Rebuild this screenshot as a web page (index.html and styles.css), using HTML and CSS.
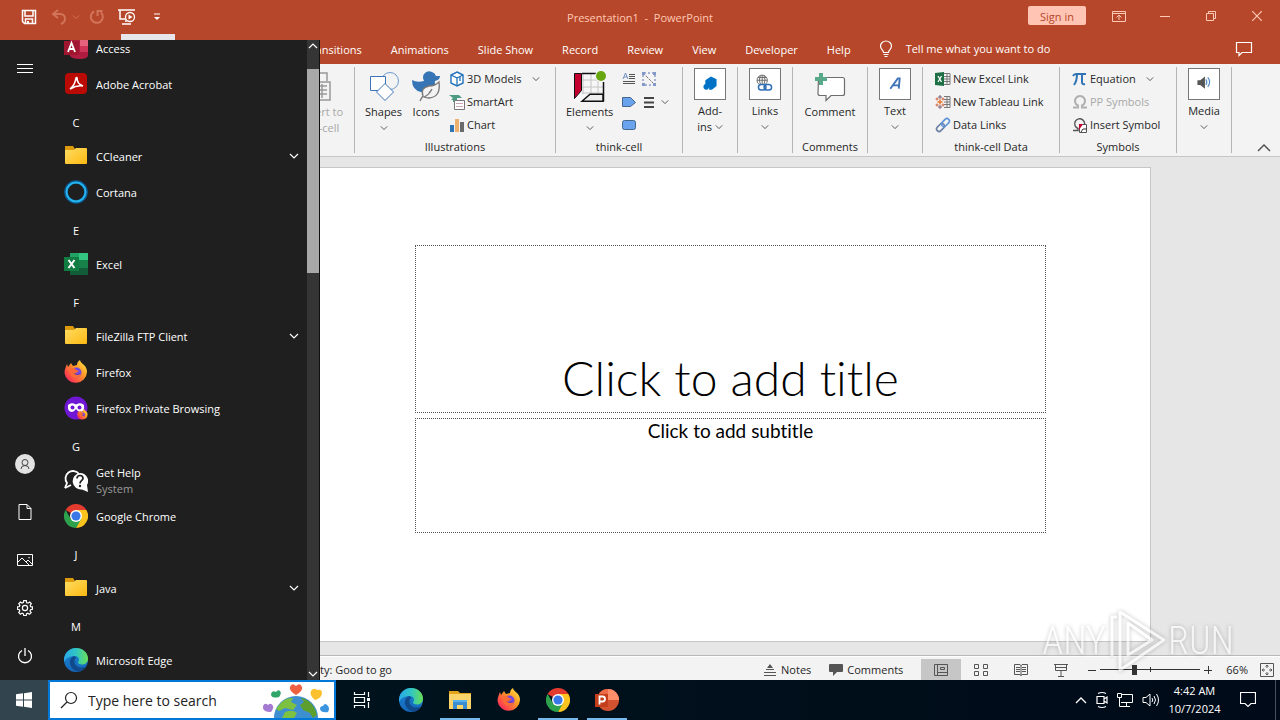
FILE: index.html
```html
<!DOCTYPE html>
<html lang="en">

<head>
    <meta charset="UTF-8">
    <meta name="viewport" content="width=device-width, initial-scale=1.0">
    <title>Presentation1 - PowerPoint</title>
    <link rel="stylesheet" href="styles.css">
</head>

<body>
    <!-- Shared icons -->
    <svg class="defs" width="0" height="0" aria-hidden="true">
        <defs>
            <linearGradient id="g-folder" x1="0" y1="0" x2="1" y2="1">
                <stop offset="0" stop-color="#ffdc63" />
                <stop offset="1" stop-color="#fcb912" />
            </linearGradient>
            <linearGradient id="g-edge" x1="0" y1="0" x2="1" y2="0">
                <stop offset="0" stop-color="#2aa8e8" />
                <stop offset="0.5" stop-color="#2fc6c4" />
                <stop offset="1" stop-color="#6ade55" />
            </linearGradient>
            <linearGradient id="g-edge2" x1="0" y1="0" x2="0" y2="1">
                <stop offset="0" stop-color="#1b87d6" />
                <stop offset="1" stop-color="#1466b8" />
            </linearGradient>
            <linearGradient id="g-fox" x1="1" y1="0" x2="0" y2="1">
                <stop offset="0" stop-color="#fff04a" />
                <stop offset="0.4" stop-color="#ff9a26" />
                <stop offset="0.8" stop-color="#ff3b50" />
                <stop offset="1" stop-color="#e31587" />
            </linearGradient>
        </defs>
        <symbol id="folder" viewBox="0 2 24 24">
            <path d="M1 4h8l2 3h10v5H1z" fill="#dc9a0c" />
            <path d="M1 8h9l2-2h10q1 0 1 1v14q0 1-1 1H2q-1 0-1-1z" fill="url(#g-folder)" />
        </symbol>
        <symbol id="chevron" viewBox="0 0 10 10">
            <path d="M1 3l4 4 4-4" fill="none" stroke="currentColor" stroke-width="1.2" />
        </symbol>
        <symbol id="edge" viewBox="0 0 24 24">
            <circle cx="12" cy="12" r="12" fill="url(#g-edge2)" />
            <path d="M0 11C1 4 6 0 12 0c7 0 12 5 12 10.500 0 4-3 6-6 6-2.500 0-4-1-4-2 0-.8 1-1.200 1-3 0-2-2-3.500-4.500-3.500C6 8 2 10 0 14z" fill="url(#g-edge)" />
            <path d="M10 8.300c-3 1-4.500 4-4 7.200.6 4 4 7 8 8.300 3.500-.5 6.500-2.600 8.200-5.400-5 2.600-11.200.6-11.700-4.400-.2-2 .5-3.400 1.700-4.200-.5-1-1.200-1.500-2.200-1.500z" fill="#114a8b" />
        </symbol>
        <symbol id="firefox" viewBox="0 0 24 24">
            <path d="M3 4l1 3 3-4 2 3 4-1c0-2 1-4 3-5 0 2 2 3 4 5 2 2 3 4 3 7a11.300 11.300 0 0 1-22.500 1C.500 9 2 7 3 4z" fill="url(#g-fox)" />
            <circle cx="12.500" cy="12.500" r="5" fill="#7548e0" />
            <path d="M6 9c3-2 5-1 6 1l3 1c-1 1-2 1.500-3 1.500 0 2 3 3 5 1.500-1 3-4 4.500-7 3.500-3-1-5-4-4-8.500z" fill="#ff6a35" />
            <path d="M10 12.500c1 1.500 4 2 6 .5-1 2.500-5 3-6-.5z" fill="#4a3bc4" />
        </symbol>
        <symbol id="chrome" viewBox="0 0 24 24">
            <path d="M12 12L1.600 6A12 12 0 0 1 22.400 6z" fill="#e33b2e" />
            <path d="M22.400 6H12v6h5.200L12 24A12 12 0 0 0 22.400 6z" fill="#fcc31e" />
            <path d="M1.600 6A12 12 0 0 0 12 24l5.200-9H12L6.800 15z" fill="#2da14c" />
            <circle cx="12" cy="12" r="6" fill="#fff" />
            <circle cx="12" cy="12" r="4.600" fill="#3b78e7" />
        </symbol>
    </svg>

    <div class="desktop">
        <div class="window">
            <header class="title-bar">
                <div class="quick-access">
                    <button aria-label="Save"><svg width="16" height="16" viewBox="0 0 16 16"><path d="M1.500 1.500h13v13h-11l-2-2zM4 1.500V7h8V1.500M4.500 14.500V10h7v4.500" fill="none" stroke="#fff" stroke-width="1.500" /><path d="M6 12h2v3H6z" fill="#fff" /></svg></button>
                    <button class="faded" aria-label="Undo"><svg width="16" height="16" viewBox="0 0 16 16"><path d="M7 1L2 5l5 4M2 5h7q5 0 5 5 0 3-4 5" fill="none" stroke="currentColor" stroke-width="2" /></svg></button>
                    <button class="faded narrow" aria-label="Undo list"><svg width="8" height="8"><use href="#chevron" /></svg></button>
                    <button class="faded" aria-label="Redo"><svg width="16" height="16" viewBox="0 0 16 16"><path d="M5 2.500A6 6 0 1 0 12 3.500M8.500 7V2h5" fill="none" stroke="currentColor" stroke-width="2" /></svg></button>
                    <button class="present" aria-label="Start from beginning"><svg width="18" height="18" viewBox="0 0 18 18"><path d="M0 2h17M2 2v9h5M8 11v3M4 16h9" fill="none" stroke="#fff" stroke-width="1.500" /><circle cx="12" cy="9" r="4.500" fill="#b7472a" stroke="#fff" stroke-width="1.300" /><path d="M10.500 6.500l4 2.500-4 2.500z" fill="#fff" /></svg></button>
                    <button aria-label="Customize"><svg width="8" height="8" viewBox="0 0 8 8"><path d="M1 1h6" stroke="#fff" /><path d="M1 4h6L4 7z" fill="#fff" /></svg></button>
                </div>
                <div class="document-title">Presentation1&nbsp; -&nbsp; PowerPoint</div>
                <div class="window-controls">
                    <button class="sign-in">Sign in</button>
                    <button aria-label="Ribbon display options"><svg width="14" height="12" viewBox="0 0 14 12"><path d="M.500 1.500h13v10H.500zM.500 3.500h13M7 10V5M4.500 7.500L7 5l2.500 2.500" fill="none" stroke="currentColor" /></svg></button>
                    <button aria-label="Minimize"><svg width="10" height="10" viewBox="0 0 10 10"><path d="M0 5.500h10" stroke="currentColor" /></svg></button>
                    <button aria-label="Restore"><svg width="10" height="10" viewBox="0 0 10 10"><path d="M.500 2.500h7v7h-7zM2.500 2V.500h7v7H8" fill="none" stroke="currentColor" /></svg></button>
                    <button aria-label="Close"><svg width="10" height="10" viewBox="0 0 10 10"><path d="M0 0l10 10M10 0L0 10" stroke="currentColor" stroke-width="1.200" /></svg></button>
                </div>
                <div class="tooltip"></div>
            </header>

            <nav class="tabs">
                <a href="#">Transitions</a>
                <a href="#">Animations</a>
                <a href="#">Slide Show</a>
                <a href="#">Record</a>
                <a href="#">Review</a>
                <a href="#">View</a>
                <a href="#">Developer</a>
                <a href="#">Help</a>
                <a href="#" class="tell-me">
                    <svg width="14" height="18" viewBox="0 0 14 18"><path d="M4.500 12.500C4.500 10 1.500 9.500 1.500 6a5.500 5 0 0 1 11 0c0 3.500-3 4-3 6.500zM4.500 14.500h5M5.500 16.500h3" fill="none" stroke="#fff" stroke-width="1.200" /></svg>
                    Tell me what you want to do
                </a>
                <button class="comments-toggle" aria-label="Comments"><svg width="18" height="16" viewBox="0 0 18 16"><path d="M1.500 1.500h15v10H7l-3 3v-3H1.500z" fill="none" stroke="#fff" stroke-width="1.200" /></svg></button>
            </nav>

            <section class="ribbon">
                <div class="group group-convert">
                    <div class="tools">
                        <button class="big disabled">
                            <svg width="32" height="32" viewBox="0 0 32 32"><path d="M12 3h15v8M12 3v8M8 12h22v18H8zM11 16h16M11 20h16M11 24h16M16 14v14M22 14v14" fill="none" stroke="#999" stroke-width="1.500" /></svg>
                            <span>Convert to<br>think-cell</span>
                        </button>
                    </div>
                </div>
                <div class="group group-illustrations">
                    <div class="tools">
                        <button class="big">
                            <svg width="32" height="32" viewBox="0 0 32 32"><circle cx="22" cy="11" r="8.500" fill="#f3f3f3" stroke="#6f9bd0" /><path d="M2.500 6.500h15v14h-15z" fill="#fff" stroke="#3d74b8" /><path d="M17 13.500l8.500 8.500-8.500 8.500L8.500 22z" fill="#fff" stroke="#3d74b8" /></svg>
                            <span>Shapes</span>
                            <svg class="arrow" width="8" height="8"><use href="#chevron" /></svg>
                        </button>
                        <button class="big">
                            <svg width="32" height="32" viewBox="0 0 32 32"><path d="M2 10q5 3 12 1-2-4 0-7 3-4 8-2 3 1 4 4h4q0 4-5 5-1 2 1 5 2 5-3 6H11Q2 20 2 10z" fill="#3575b5" /><path d="M10 31q2-4 3-5-3-8 6-10 6 0 10-4 2 15-10 16-3 0-5-1 5-2 8-8" fill="#f3f3f3" stroke="#777" stroke-width="1.300" /></svg>
                            <span>Icons</span>
                        </button>
                        <div class="stack">
                            <button><svg width="16" height="16" viewBox="0 0 16 16"><path d="M8 1l6 3v8l-6 3-6-3V4z" fill="#fff" stroke="#2372ba" stroke-width="1.400" /><path d="M8 15V7L2 4M8 7l6-3M11 6v4" fill="none" stroke="#2372ba" stroke-width="1.300" /></svg>3D Models<svg class="arrow" width="8" height="8"><use href="#chevron" /></svg></button>
                            <button><svg width="16" height="16" viewBox="0 0 16 16"><path d="M0 1h10l3 3H8v4H4V6H2l2-2z" fill="#4b9c83" /><path d="M5.500 6.500h10v9h-10z" fill="#fff" stroke="#777" /><path d="M7 9.500h7M7 12.500h7" stroke="#c9a6b5" /></svg>SmartArt</button>
                            <button><svg width="16" height="16" viewBox="0 0 16 16"><path d="M1 8h4v7H1z" fill="#2f74b5" /><path d="M6 2h4v13H6z" fill="#eeb06d" /><path d="M11 5h4v10h-4z" fill="#6b6b6b" /></svg>Chart</button>
                        </div>
                    </div>
                    <h2>Illustrations</h2>
                </div>
                <div class="group group-think-cell">
                    <div class="tools">
                        <button class="big">
                            <svg width="34" height="32" viewBox="0 0 34 32"><path d="M1.500 3.500h29v28h-29z" fill="#f7f7f7" /><path d="M10 4v20M18 4v20M25 4v20M9 10h21M9 17h21M9 23h21" stroke="#c4c4c4" /><path d="M9 3.500h14M30.500 12v19.500" stroke="#111" stroke-width="1.500" /><path d="M1.500 3.500h7v17l-7 8z" fill="#c4002f" stroke="#111" /><path d="M9 31.300l8-7h13v7z" fill="#eee" stroke="#111" stroke-width="1.500" /><circle cx="28" cy="6" r="6" fill="#f3f3f3" /><circle cx="28" cy="6" r="5" fill="#68a60f" /></svg>
                            <span>Elements</span>
                            <svg class="arrow" width="8" height="8"><use href="#chevron" /></svg>
                        </button>
                        <div class="stack icons-only">
                            <button aria-label="Text box"><svg width="16" height="16" viewBox="0 0 16 16"><path d="M2 8l2.500-6L7 8M3 6h3" fill="none" stroke="#7192c4" /><path d="M8 3.500h6M8 5.500h6M8 7.500h6M2 10.500h12M2 12.500h12" stroke="#555" /></svg></button>
                            <button aria-label="Pentagon"><svg width="16" height="16" viewBox="0 0 16 16"><path d="M1.500 3.500h8l5 5-5 4h-8z" fill="#69a3ee" stroke="#44668c" /></svg></button>
                            <button aria-label="Rounded box"><svg width="16" height="16" viewBox="0 0 16 16"><rect x="1.500" y="3.500" width="13" height="9" rx="2" fill="#69a3ee" stroke="#44668c" /></svg></button>
                        </div>
                        <div class="stack icons-only">
                            <button aria-label="Connector"><svg width="16" height="16" viewBox="0 0 16 16"><path d="M3 2h10M2 4v9M4 14h9M14 4v9" fill="none" stroke="#5573b8" stroke-dasharray="2 2" /><path d="M2 2l12 12" stroke="#777" stroke-dasharray="3 1" /><path d="M1 1h3v3H1zM12 1h3v3h-3zM1 12h3v3H1zM12 12h3v3h-3z" fill="#8298c7" /></svg></button>
                            <button aria-label="Lines"><svg width="16" height="16" viewBox="0 0 16 16"><path d="M3 4h10M3 8.500h10M3 13h10" stroke="#444" stroke-width="2" /></svg><svg class="arrow" width="8" height="8"><use href="#chevron" /></svg></button>
                        </div>
                    </div>
                    <h2>think-cell</h2>
                </div>
                <div class="group group-single">
                    <div class="tools">
                        <button class="boxed">
                            <svg width="32" height="32" viewBox="0 0 32 32"><path d="M11 12l6-4 6 3v7l-5 4h-3q1-5-4-5z" fill="#0072c6" /><circle cx="12" cy="19" r="3" fill="#0072c6" /></svg>
                            <span>Add-<br>ins <svg class="arrow" width="8" height="8"><use href="#chevron" /></svg></span>
                        </button>
                    </div>
                </div>
                <div class="group group-single">
                    <div class="tools">
                        <button class="boxed">
                            <svg width="32" height="32" viewBox="0 0 32 32"><circle cx="13" cy="12" r="5.500" fill="none" stroke="#666" /><path d="M7.500 12h11M13 6.500v11M8.500 9h9M11 7q-2 5 0 9M15 7q2 5 0 9" fill="none" stroke="#666" /><rect x="9" y="16.500" width="8" height="6" rx="3" fill="#fff" stroke="#2f6fb5" stroke-width="1.600" /><rect x="15" y="16.500" width="8" height="6" rx="3" fill="none" stroke="#2f6fb5" stroke-width="1.600" /></svg>
                            <span>Links</span>
                            <svg class="arrow" width="8" height="8"><use href="#chevron" /></svg>
                        </button>
                    </div>
                </div>
                <div class="group group-comments">
                    <div class="tools">
                        <button class="big">
                            <svg width="32" height="32" viewBox="0 0 32 32"><path d="M4.500 7.500h24q2 0 2 2v14q0 2-2 2H17l-5 5v-5H6q-2 0-2-2z" fill="#fff" stroke="#6d6d6d" stroke-width="1.200" /><path d="M5 3h4v4h4v4H9v4H5v-4H1V7h4z" fill="#5aa88a" /></svg>
                            <span>Comment</span>
                        </button>
                    </div>
                    <h2>Comments</h2>
                </div>
                <div class="group group-single">
                    <div class="tools">
                        <button class="boxed">
                            <svg width="32" height="32" viewBox="0 0 32 32"><path d="M11 21l8-11h2l-1 11M13.500 17.500h7" fill="none" stroke="#3f73b8" stroke-width="2" /></svg>
                            <span>Text</span>
                            <svg class="arrow" width="8" height="8"><use href="#chevron" /></svg>
                        </button>
                    </div>
                </div>
                <div class="group group-data">
                    <div class="tools">
                        <div class="stack">
                            <button><svg width="16" height="16" viewBox="0 0 16 16"><path d="M9 2.500h6v11H9M12 2v12M9 5.500h6M9 8h6M9 10.500h6" fill="none" stroke="#777" /><path d="M0 2l9-1v14l-9-1z" fill="#1d7044" /><path d="M3 5l3.500 6M6.500 5L3 11" stroke="#fff" stroke-width="1.300" /></svg>New Excel Link</button>
                            <button><svg width="16" height="16" viewBox="0 0 16 16"><path d="M9 2.500h6v11H9M12 2v12M9 5.500h6M9 8h6M9 10.500h6" fill="none" stroke="#777" /><path d="M5 1v4M3 3h4M5 11v4M3 13h4" stroke="#7a5f78" /><path d="M5 5.500v5M2.500 8h5" stroke="#e8762c" stroke-width="1.500" /><path d="M2 3.500v3M.500 5h3M2 9.500v3M.500 11h3M8 3.500v3M6.500 5h3M8 9.500v3M6.500 11h3" stroke="#cc6640" /></svg>New Tableau Link</button>
                            <button><svg width="16" height="16" viewBox="0 0 16 16"><g transform="rotate(-45 8 8)" fill="none" stroke-width="1.600"><rect x="0" y="5.500" width="9" height="5" rx="2.500" stroke="#6a7fa5" /><rect x="7" y="5.500" width="9" height="5" rx="2.500" stroke="#5b93d8" /></g></svg>Data Links</button>
                        </div>
                    </div>
                    <h2>think-cell Data</h2>
                </div>
                <div class="group group-symbols">
                    <div class="tools">
                        <div class="stack">
                            <button><svg width="16" height="16" viewBox="0 0 16 16"><path d="M1 5q1-2 3-2h10M5 3q0 7-3 11M10 3v8q0 3 3 2" fill="none" stroke="#2f74b5" stroke-width="2" /></svg>Equation<svg class="arrow" width="8" height="8"><use href="#chevron" /></svg></button>
                            <button class="disabled"><svg width="16" height="16" viewBox="0 0 16 16"><path d="M1 13.500h5v-2a5 5 0 1 1 4 0v2h5" fill="none" stroke="#b0b0b0" stroke-width="2" /></svg>PP Symbols</button>
                            <button><svg width="16" height="16" viewBox="0 0 16 16"><path d="M1 13.500h5v-2a5 5 0 1 1 5-1" fill="none" stroke="#555" stroke-width="1.400" /><path d="M7.500 7.500h7v8h-7z" fill="#fff" stroke="#555" /><path d="M7 7h4l-4 6z" fill="#c4002f" /><path d="M9 15l2-3h4" fill="none" stroke="#333" /></svg>Insert Symbol</button>
                        </div>
                    </div>
                    <h2>Symbols</h2>
                </div>
                <div class="group group-single">
                    <div class="tools">
                        <button class="boxed">
                            <svg width="32" height="32" viewBox="0 0 32 32"><path d="M9 12h3l5-4v13l-5-4H9z" fill="#555" /><path d="M18 11q2 3 0 6M20 9q4 5 0 10" fill="none" stroke="#5b93c8" stroke-width="1.300" /></svg>
                            <span>Media</span>
                            <svg class="arrow" width="8" height="8"><use href="#chevron" /></svg>
                        </button>
                    </div>
                </div>
                <button class="collapse" aria-label="Collapse the ribbon"><svg width="14" height="8" viewBox="0 0 14 8"><path d="M1 7l6-6 6 6" fill="none" stroke="#555" stroke-width="1.500" /></svg></button>
            </section>

            <main class="canvas">
                <div class="slide">
                    <div class="placeholder title">Click to add title</div>
                    <div class="placeholder subtitle">Click to add subtitle</div>
                </div>
            </main>

            <footer class="status-bar">
                <span class="accessibility">Accessibility: Good to go</span>
                <button class="labelled"><svg width="14" height="14" viewBox="0 0 14 14"><path d="M7 1l3 4H4z" fill="#555" /><path d="M3 6.500h8M1 9.500h12M1 12.500h12" stroke="#555" /></svg>Notes</button>
                <button class="labelled"><svg width="14" height="14" viewBox="0 0 14 14"><path d="M1 1h12q1 0 1 1v6q0 1-1 1H8l-4 4V9H1Q0 9 0 8V2q0-1 1-1z" fill="#555" /></svg>Comments</button>
                <div class="views">
                    <button class="active" aria-label="Normal"><svg width="14" height="14" viewBox="0 0 14 14"><path d="M.500 1.500h13v11H.500zM3.500 2v10M4 9.500h9M6.500 4.500h4v2h-4z" fill="none" stroke="#555" /></svg></button>
                    <button aria-label="Slide sorter"><svg width="14" height="14" viewBox="0 0 14 14"><path d="M.500 1.500h4v4h-4zM9.500 1.500h4v4h-4zM.500 8.500h4v4h-4zM9.500 8.500h4v4h-4z" fill="none" stroke="#555" /></svg></button>
                    <button aria-label="Reading view"><svg width="14" height="14" viewBox="0 0 14 14"><path d="M.500 1.500H6l1 1 1-1h5.500v10H8l-1 1-1-1H.500zM7 2v11M2 4.500h4M2 6.500h4M2 8.500h4M8 4.500h4M8 6.500h4M8 8.500h4" fill="none" stroke="#555" /></svg></button>
                    <button aria-label="Slide show"><svg width="14" height="14" viewBox="0 0 14 14"><path d="M0 1.500h14M1.500 4.500v3h11v-3zM1.500 2v3M12.500 2v3M7 8v5M4 13.500h6" fill="none" stroke="#555" /></svg></button>
                </div>
                <button class="zoom-step" aria-label="Zoom out"><svg width="10" height="10" viewBox="0 0 10 10"><path d="M1 5.500h8" stroke="#333" /></svg></button>
                <input class="zoom-slider" type="range" min="0" max="100" value="33" aria-label="Zoom">
                <button class="zoom-step" aria-label="Zoom in"><svg width="10" height="10" viewBox="0 0 10 10"><path d="M1 5.500h8M5.500 1v8" stroke="#333" /></svg></button>
                <span class="zoom-value">66%</span>
                <button class="fit" aria-label="Fit slide"><svg width="14" height="14" viewBox="0 0 14 14"><path d="M.500.500h13v13H.500zM7 2v3M7 9v3M2 7h3M9 7h3M5.500 3.500L7 2l1.500 1.500M5.500 10.500L7 12l1.500-1.500M3.500 5.500L2 7l1.500 1.500M10.500 5.500L12 7l-1.500 1.500" fill="none" stroke="#555" /></svg></button>
            </footer>
        </div>

        <div class="watermark">
            <span>ANY</span>
            <svg width="62" height="66" viewBox="0 0 62 66"><path d="M6 48V9h5M14 54V4l44 28-44 30zM22 15v32l24-15z" fill="none" stroke="#fff" stroke-width="3" stroke-linejoin="round" /></svg>
            <span>RUN</span>
        </div>

        <!-- Start menu -->
        <aside class="start-menu">
            <div class="rail">
                <button aria-label="Expand"><svg width="16" height="10" viewBox="0 0 16 10"><path d="M0 .500h16M0 4.500h16M0 8.500h16" stroke="#fff" /></svg></button>
                <button class="user" aria-label="Account"><svg width="20" height="20" viewBox="0 0 20 20"><circle cx="10" cy="10" r="10" fill="#e2e2e2" /><circle cx="10" cy="8.500" r="3" fill="none" stroke="#444" /><path d="M6 15q0-3.500 4-3.500t4 3.500" fill="none" stroke="#444" /></svg></button>
                <button aria-label="Documents"><svg width="14" height="16" viewBox="0 0 14 16"><path d="M1 .500h8l4 4v11H1zM9 .500v4h4" fill="none" stroke="#fff" /></svg></button>
                <button aria-label="Pictures"><svg width="16" height="12" viewBox="0 0 16 12"><path d="M.500.500h15v11H.500zM1 8l4-4 7 7M9 8l2-2 4 4" fill="none" stroke="#fff" /><path d="M11.500 3h1.200v1.200h-1.200z" fill="#fff" /></svg></button>
                <button aria-label="Settings"><svg width="16" height="16" viewBox="0 0 16 16"><path d="M6.700.700h2.600l.4 2 1.300.5 1.700-1.100 1.600 1.600L13.200 5.400l.4 1.200 1.800.2v2.500l-1.900.4-.5 1.300 1.200 1.600-1.800 1.700-1.600-1.100-1.200.5-.4 1.800H6.700l-.4-1.900-1.300-.5-1.600 1.100-1.700-1.700L2.800 11l-.5-1.300-1.800-.4V6.800l1.900-.3.5-1.200-1.100-1.700 1.700-1.600L5 3.100l1.300-.5z" fill="none" stroke="#fff" stroke-width="1.200" /><circle cx="8" cy="8" r="2.600" fill="none" stroke="#fff" stroke-width="1.200" /></svg></button>
                <button aria-label="Power"><svg width="16" height="16" viewBox="0 0 16 16"><path d="M8 0v8M5 2.500a6.500 6.500 0 1 0 6 0" fill="none" stroke="#fff" stroke-width="1.300" /></svg></button>
            </div>
            <ul class="apps">
                <li><svg width="24" height="24" viewBox="0 0 24 24"><path d="M6 2h16q2 0 2 2v15q0 4-8 4T6 20z" fill="#b01c40" /><path d="M16 2h6q2 0 2 2v6h-8z" fill="#e5627d" /><path d="M16 10h8v6h-8z" fill="#cf3558" /><path d="M0 5h15v14H0z" fill="#a0152f" /><path d="M4 16l3.500-9 3.500 9M5 13h5" fill="none" stroke="#fff" stroke-width="1.800" /></svg><span>Access</span></li>
                <li><svg width="24" height="24" viewBox="0 0 24 24"><rect x="1" y="1" width="22" height="21" rx="4" fill="#b90a04" /><path d="M6 17q5-4 6-11 1-1 1 0 0 6 6 8-6-1-13 3z" fill="none" stroke="#fff" stroke-width="1.600" /></svg><span>Adobe Acrobat</span></li>
                <li class="letter">C</li>
                <li><svg width="24" height="24"><use href="#folder" /></svg><span>CCleaner</span><svg class="expand" width="10" height="10"><use href="#chevron" /></svg></li>
                <li><svg width="24" height="24" viewBox="0 0 24 24"><circle cx="12" cy="12" r="10" fill="none" stroke="#0b5a98" stroke-width="3.600" /><circle cx="12" cy="12" r="9.500" fill="none" stroke="#25b5ea" stroke-width="2" /></svg><span>Cortana</span></li>
                <li class="letter">E</li>
                <li><svg width="24" height="24" viewBox="0 0 24 24"><path d="M6 1h18v22H6z" fill="#17814a" /><path d="M15 1h9v7h-9z" fill="#33c481" /><path d="M6 1h9v7H6z" fill="#21a366" /><path d="M6 16h18v7H6z" fill="#125c39" /><path d="M0 5h15v14H0z" fill="#107c41" /><path d="M4.500 8l6 8M10.500 8l-6 8" stroke="#fff" stroke-width="2" /></svg><span>Excel</span></li>
                <li class="letter">F</li>
                <li><svg width="24" height="24"><use href="#folder" /></svg><span>FileZilla FTP Client</span><svg class="expand" width="10" height="10"><use href="#chevron" /></svg></li>
                <li><svg width="24" height="24"><use href="#firefox" /></svg><span>Firefox</span></li>
                <li><svg width="24" height="24" viewBox="0 0 24 24"><circle cx="12" cy="12" r="11.500" fill="#6f17d4" /><path d="M4 9q3-3 8-.5Q17 6 20 9q1 7-4 7-2 0-4-3-2 3-4 3-5 0-4-7z" fill="#fff" /><circle cx="8.500" cy="11.500" r="2" fill="#6f17d4" /><circle cx="15.500" cy="11.500" r="2" fill="#6f17d4" /><svg x="13" y="13" width="11" height="11"><use href="#firefox" /></svg></svg><span>Firefox Private Browsing</span></li>
                <li class="letter">G</li>
                <li><svg width="24" height="24" viewBox="0 0 24 24"><path d="M1 20l2-5a7.500 7.500 0 1 1 12-9" fill="none" stroke="#fff" stroke-width="1.800" /><path d="M1 20l6-3" stroke="#fff" stroke-width="1.800" /><path d="M16 5a8 8 0 0 1 7 12l1 7-6-2.500A8.300 8.300 0 1 1 16 5z" fill="#fff" /><path d="M13 10.500q0-3 3-3t3 3c0 2-3 2-3 5" fill="none" stroke="#1f1f1f" stroke-width="1.700" /><circle cx="16" cy="18" r="1.200" fill="#1f1f1f" /></svg><span>Get Help<small>System</small></span></li>
                <li><svg width="24" height="24"><use href="#chrome" /></svg><span>Google Chrome</span></li>
                <li class="letter">J</li>
                <li><svg width="24" height="24"><use href="#folder" /></svg><span>Java</span><svg class="expand" width="10" height="10"><use href="#chevron" /></svg></li>
                <li class="letter">M</li>
                <li><svg width="24" height="24"><use href="#edge" /></svg><span>Microsoft Edge</span></li>
            </ul>
            <div class="scrollbar">
                <svg class="up" width="10" height="10"><use href="#chevron" /></svg>
                <div class="thumb"></div>
                <svg width="10" height="10"><use href="#chevron" /></svg>
            </div>
        </aside>
    </div>

    <div class="taskbar">
        <button class="start" aria-label="Start"><svg width="16" height="16" viewBox="0 0 16 16"><path d="M0 2.300L7 1.300v6.200H0zM8 1.200L16 0v7.500H8zM0 8.500h7v6.200l-7-1zM8 8.500h8V16l-8-1.200z" fill="#fff" /></svg></button>
        <label class="search">
            <svg width="18" height="18" viewBox="0 0 18 18"><circle cx="11" cy="7" r="5.500" fill="none" stroke="#222" stroke-width="1.200" /><path d="M7 11l-6 6" stroke="#222" stroke-width="1.200" /></svg>
            <input type="text" placeholder="Type here to search" aria-label="Search">
            <svg width="72" height="36" viewBox="3 0 72 36">
                <circle cx="37" cy="36" r="22" fill="#3e8fd0" />
                <path d="M20 23q6-8 14-7l-2 4 6 3-4 5-8-2-6 3-3-2zM26 30q8-3 12 1l-3 5H23z" fill="#7dc142" />
                <path d="M42 16q12 2 16 17l-4 3-3-5-7-3-3-5 4-3z" fill="#5d9f2e" />
                <path d="M37 13q-7-4-6-8Q33 0 37 4 41 0 43 5 44 9 37 13z" fill="#ee6042" />
                <path d="M20 15q-8 2-8-3 1-4 5-2 2-3 4-1 2 2-1 6z" fill="#2fa56a" />
                <path d="M12 30q-9 0-8-6 2-4 5-1 3-3 5 1 1 2-2 6z" fill="#a57bd2" />
                <path d="M56 18q-6-5-4-9 3-4 6-1 5-1 5 3 0 5-7 7z" fill="#fbc02d" />
                <path d="M69 30q-7 1-8-3 0-3 3-3 2-4 5 0 2 2 0 6z" fill="#3b94e0" />
            </svg>
        </label>
        <button aria-label="Task view"><svg width="18" height="18" viewBox="0 0 18 18"><path d="M1.500 1v2.500h10V1M1.500 6.500h10v5h-10zM1.500 17v-2.500h10V17M15.500 1v5M15.500 11v6" fill="none" stroke="#fff" stroke-width="1.200" /><path d="M14 7h3v3h-3z" fill="#fff" /></svg></button>
        <button aria-label="Microsoft Edge"><svg width="24" height="24"><use href="#edge" /></svg></button>
        <button class="open" aria-label="File Explorer"><svg width="24" height="24" viewBox="0 0 24 24"><path d="M1 3h9l2 2h11v4H1z" fill="#e3a31b" /><path d="M1 6h22v15H1z" fill="#fbd36b" /><path d="M5 12h14v9h-4v-4H9v4H5z" fill="#3b8dd2" /><path d="M5 12h14v2H5z" fill="#57b1ee" /></svg></button>
        <button aria-label="Firefox"><svg width="24" height="24"><use href="#firefox" /></svg></button>
        <button class="open" aria-label="Google Chrome"><svg width="24" height="24"><use href="#chrome" /></svg></button>
        <button class="open" aria-label="PowerPoint"><svg width="24" height="24" viewBox="0 0 24 24"><circle cx="13" cy="12" r="11" fill="#d35230" /><path d="M13 1a11 11 0 0 1 11 11H13z" fill="#ff8f6b" /><path d="M13 1v11H2A11 11 0 0 1 13 1z" fill="#ed6c47" /><path d="M0 6h13v13H0z" fill="#c43e1c" /><path d="M4.500 16.500v-8h3q2.500 0 2.500 2.500t-2.500 2.500h-3" fill="none" stroke="#fff" stroke-width="1.800" /></svg></button>
        <div class="tray">
            <svg width="12" height="12" viewBox="0 0 12 12"><path d="M1 9l5-5 5 5" fill="none" stroke="#fff" stroke-width="1.300" /></svg>
            <svg width="12" height="18" viewBox="0 0 12 18"><path d="M2 2.500q4-2 8 0M2 15.500q4 2 8 0M1 5.500h7v7H1zM8 8l3-2v6l-3-2" fill="none" stroke="#fff" stroke-width="1.200" /></svg>
            <svg width="16" height="16" viewBox="0 0 16 16"><path d="M5 2.500h10.500v8H4M9.500 11v3M6 14.500h7M.500 1.500h4v4h-4zM2.500 6v8.500H6" fill="none" stroke="#fff" /></svg>
            <svg width="18" height="16" viewBox="0 0 18 16"><path d="M1 5.500h3l4-3.500v12l-4-3.500H1zM10 6q1.500 2 0 4M12 4q3 4 0 8M14.500 2q4 6 0 12" fill="none" stroke="#fff" /></svg>
        </div>
        <div class="clock">4:42 AM<br>10/7/2024</div>
        <div class="notifications"><svg width="16" height="18" viewBox="0 0 16 18"><path d="M.500 1.500h15v11H11l-3 3-3-3H.500z" fill="none" stroke="#fff" stroke-width="1.200" /></svg></div>
    </div>
</body>

</html>
```
FILE: styles.css
```css
* {
    box-sizing: border-box;
}

body {
    display: flex;
    flex-direction: column;
    height: 100vh;
    margin: 0;
    overflow: hidden;
    font-family: "Open Sans", "Noto Sans", sans-serif;
    font-size: 11px;
    line-height: 16px;
    color: #262626;
}

button {
    padding: 0;
    border: none;
    background: none;
    color: inherit;
    font: inherit;
}

a {
    color: inherit;
    text-decoration: none;
}

svg {
    flex: none;
}

.defs {
    position: absolute;
}

.desktop {
    position: relative;
    flex: 1;
    min-height: 0;
    display: flex;
}

.window {
    flex: 1;
    min-width: 0;
    display: flex;
    flex-direction: column;
    background: #f3f3f3;
}

/* Title bar */
.title-bar {
    position: relative;
    display: grid;
    grid-template-columns: 1fr auto 1fr;
    align-items: center;
    height: 34px;
    background: #b7472a;
    color: #ffc9b5;
}

.document-title {
    padding-top: 2px;
}

.quick-access {
    display: flex;
    align-items: center;
    padding-left: 18px;
}

.quick-access button {
    display: flex;
    justify-content: center;
    align-items: center;
    width: 22px;
    margin-right: 8px;
}

.quick-access .faded {
    color: #d2745a;
}

.quick-access .narrow {
    width: 8px;
    margin: 0 6px 0 -6px;
}

.window-controls {
    display: flex;
    justify-content: flex-end;
    align-items: center;
    padding-bottom: 3px;
}

.window-controls button {
    display: flex;
    justify-content: center;
    align-items: center;
    width: 46px;
    height: 19px;
}

.window-controls .sign-in {
    width: 58px;
    margin-right: 10px;
    padding-top: 2px;
    border-radius: 2px;
    background: #ffc4b3;
    color: #b7472a;
}

.tooltip {
    position: absolute;
    top: 34px;
    left: 121px;
    width: 54px;
    height: 10px;
    background: #e6e6ea;
}

/* Tabs */
.tabs {
    display: flex;
    align-items: center;
    height: 30px;
    padding: 0 27px 0 290px;
    background: #b7472a;
    color: #fff;
}

.tabs a {
    padding: 1px 14px 0 15px;
    white-space: nowrap;
}

.tabs .tell-me {
    display: flex;
    align-items: center;
    gap: 13px;
    padding-top: 0;
    padding-left: 14px;
}

.comments-toggle {
    display: flex;
    margin-left: auto;
}

/* Ribbon */
.ribbon {
    display: flex;
    height: 93px;
    padding: 3px 0;
    border-bottom: 1px solid #c6c6c6;
}

.group {
    flex: none;
    display: flex;
    flex-direction: column;
    justify-content: space-between;
    border-right: 1px solid #b5b5b5;
}

.group h2 {
    margin: 0;
    font-size: 11px;
    font-weight: normal;
    line-height: 12px;
    text-align: center;
}

.tools {
    display: flex;
    justify-content: center;
}

.group-convert {
    width: 355px;
}

.group-convert .tools {
    justify-content: flex-end;
    padding-right: 7px;
}

.group-illustrations {
    width: 201px;
}

.group-think-cell {
    width: 127px;
}

.group-single {
    width: 55px;
}

.group-comments {
    width: 75px;
}

.group-data {
    width: 137px;
}

.group-symbols {
    width: 117px;
}

.group-illustrations .tools,
.group-think-cell .tools {
    justify-content: flex-start;
    padding-left: 6px;
}

.group-data .tools,
.group-symbols .tools {
    justify-content: flex-start;
    padding-left: 9px;
}

.big,
.boxed {
    display: flex;
    flex-direction: column;
    align-items: center;
    padding: 3px 4px 0;
    white-space: nowrap;
}

.big svg:first-child {
    margin-bottom: 2px;
}

.boxed {
    padding-top: 1px;
}

.boxed svg:first-child {
    margin-bottom: 3px;
    border: 1px solid #777;
    background: #fff;
}

.big .arrow,
.boxed > .arrow {
    margin-top: 4px;
}

.stack {
    display: flex;
    flex-direction: column;
}

.stack button {
    display: flex;
    align-items: center;
    gap: 2px;
    height: 23px;
    padding-left: 3px;
    white-space: nowrap;
}

.stack .arrow {
    margin-left: 8px;
}

.icons-only button {
    gap: 0;
    padding-left: 4px;
}

.icons-only .arrow {
    margin-left: 4px;
}

.disabled {
    color: #a8a8a8;
}

.arrow {
    color: #555;
}

.collapse {
    align-self: flex-end;
    display: flex;
    margin: 0 9px 1px auto;
}

/* Slide */
.canvas {
    flex: 1;
    display: flex;
    padding: 10px 129px 13px 310px;
    border-bottom: 1px solid #b9b9b9;
    background: #e6e6e6;
}

.slide {
    flex: 1;
    display: flex;
    flex-direction: column;
    gap: 5px;
    padding: 77px 104px 108px;
    border: 1px solid #c6c6c6;
    background: #fff;
    color: #000;
    font-family: Lato, sans-serif;
    font-variant-ligatures: none;
    text-align: center;
}

.placeholder {
    border: 1px dotted #555;
}

.title {
    flex: 166;
    display: flex;
    justify-content: center;
    align-items: flex-end;
    padding-bottom: 6px;
    font-size: 48px;
    font-weight: 300;
    line-height: 56px;
}

.subtitle {
    flex: 117;
    font-size: 19px;
    line-height: 24px;
}

/* Status bar */
.status-bar {
    display: flex;
    align-items: center;
    height: 24px;
    padding: 2px 6px 0 268px;
    border-top: 1px solid #fff;
}

.accessibility {
    margin-right: auto;
}

.labelled {
    display: flex;
    align-items: center;
    gap: 4px;
    margin-right: 18px;
}

.views {
    display: flex;
    align-self: stretch;
    margin-right: 3px;
}

.views button {
    display: flex;
    justify-content: center;
    align-items: center;
    width: 40px;
}

.views .active {
    background: #c6c6c6;
}

.zoom-step {
    display: flex;
    margin: 0 3px;
}

.zoom-slider {
    appearance: none;
    width: 100px;
    height: 10px;
    margin: 0;
    background: linear-gradient(#333, #333) 50% 50% / 1px 5px no-repeat, linear-gradient(#333, #333) 0 50% / 100% 1px no-repeat;
}

.zoom-slider::-webkit-slider-thumb {
    appearance: none;
    width: 5px;
    height: 10px;
    background: #333;
}

.zoom-value {
    margin: 0 12px 0 10px;
}

.fit {
    display: flex;
}

/* Watermark */
.watermark {
    position: absolute;
    right: 46px;
    bottom: 6px;
    display: flex;
    align-items: center;
    color: #fff;
    font-family: "Roboto Condensed", Roboto, sans-serif;
    font-size: 38px;
    font-weight: 300;
    line-height: 40px;
    opacity: 0.6;
    filter: drop-shadow(0 0 2px rgba(0, 0, 0, 0.4));
    pointer-events: none;
}

/* Start menu */
.start-menu {
    position: absolute;
    top: 40px;
    bottom: 0;
    left: 0;
    width: 320px;
    display: flex;
    overflow: hidden;
    border-right: 1px solid #111;
    background: #1f1f1f;
    color: #fff;
}

.rail {
    display: flex;
    flex-direction: column;
    width: 50px;
    padding-top: 5px;
}

.rail button {
    display: flex;
    justify-content: center;
    align-items: center;
    height: 48px;
}

.rail .user {
    margin-top: auto;
}

.apps {
    flex: 1;
    margin: -10px 0 0;
    padding: 0 8px 0 14px;
    list-style: none;
}

.apps li {
    display: flex;
    align-items: center;
    gap: 8px;
    height: 36px;
}

.apps span {
    padding-top: 2px;
}

.apps .letter {
    width: 24px;
    justify-content: center;
    padding-top: 5px;
}

.apps small {
    display: block;
    color: #9a9a9a;
    font-size: 11px;
}

.expand {
    margin-left: auto;
}

.scrollbar {
    display: flex;
    flex-direction: column;
    align-items: center;
    width: 12px;
    padding-bottom: 1px;
    background: #353535;
}

.scrollbar .up {
    margin: 1px 0 18px;
    transform: rotate(180deg);
}

.thumb {
    width: 12px;
    height: 204px;
    margin-bottom: auto;
    background: #a8a8a8;
}

/* Taskbar */
.taskbar {
    display: flex;
    height: 40px;
    background: linear-gradient(90deg, #00161f, #000a18);
    color: #fff;
}

.taskbar button {
    display: flex;
    justify-content: center;
    align-items: center;
    width: 48px;
    margin-right: 1px;
}

.taskbar .start {
    margin: 0;
    background: #32454f;
}

.taskbar .open {
    border: solid #76b9ed;
    border-width: 0 0 2px;
    width: 40px;
    margin: 0 5px 0 4px;
    padding-top: 2px;
}

.search {
    display: flex;
    align-items: center;
    width: 288px;
    margin-right: 2px;
    padding-left: 10px;
    border: 2px solid #0078d7;
    background: #fff;
}

.search input {
    flex: 1;
    min-width: 0;
    padding: 0 0 0 10px;
    border: none;
    outline: none;
    background: none;
    font: 14px "Open Sans", "Noto Sans", sans-serif;
}

.search input::placeholder {
    color: #222;
}

.tray {
    display: flex;
    align-items: center;
    gap: 9px;
    margin-left: auto;
}

.clock {
    width: 69px;
    padding-top: 2px;
    line-height: 18px;
    text-align: center;
}

.notifications {
    display: flex;
    justify-content: center;
    align-items: center;
    width: 47px;
    margin-right: 4px;
    padding-right: 9px;
    border-right: 1px solid #45525c;
}
```
